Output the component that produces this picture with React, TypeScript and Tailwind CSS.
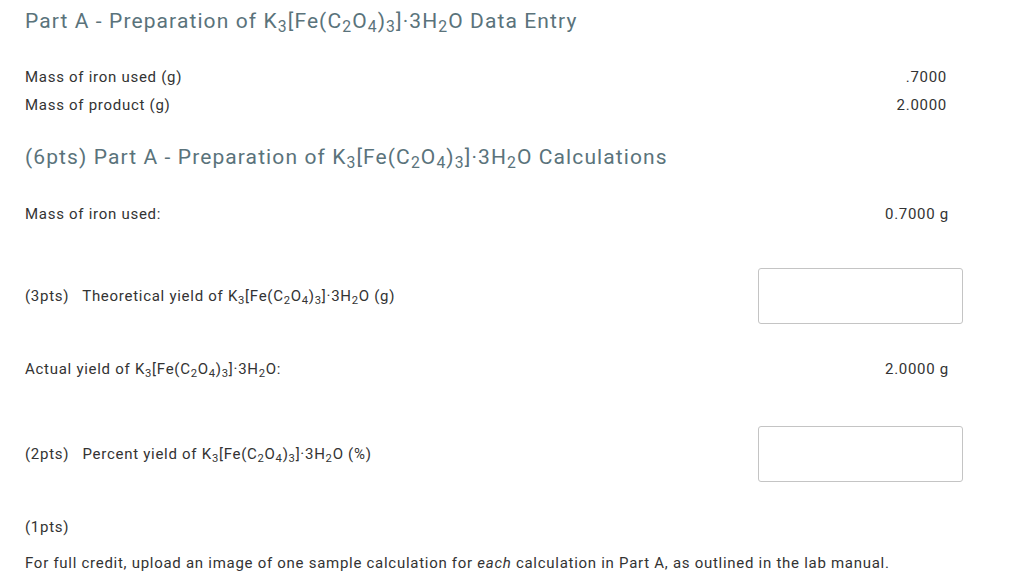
import React from 'react';

const Formula: React.FC = () => (
  <span>
    K<sub>3</sub>[Fe(C<sub>2</sub>O<sub>4</sub>)<sub>3</sub>]·3H<sub>2</sub>O
  </span>
);

const Box: React.FC = () => (
  <div className="w-[205px] h-[56px] rounded-[3px] border border-[#c4c4c4] bg-white" />
);

const App: React.FC = () => {
  return (
    <div
      className="w-[1024px] h-[578px] bg-white text-[#333] text-[15px] leading-[28px] tracking-[0.72px] px-[25px] pt-[7px] overflow-hidden"
      style={{ fontFamily: 'Roboto, "Liberation Sans", sans-serif' }}
    >
      <h1 className="text-[21px] leading-[28px] tracking-[1.1px] text-[#5a737b]">
        Part A - Preparation of <Formula /> Data Entry
      </h1>

      <div className="mt-[28px] pr-[52px]">
        <div className="flex justify-between">
          <span>Mass of iron used (g)</span>
          <span>.7000</span>
        </div>
        <div className="flex justify-between">
          <span>Mass of product (g)</span>
          <span>2.0000</span>
        </div>
      </div>

      <h2 className="mt-[24px] text-[21px] leading-[28px] tracking-[1.1px] text-[#5a737b]">
        (6pts) Part A - Preparation of <Formula /> Calculations
      </h2>

      <div className="mt-[29px] flex justify-between pr-[50px]">
        <span>Mass of iron used:</span>
        <span>0.7000 g</span>
      </div>

      <div className="mt-[40px] flex justify-between items-center pr-[36px]">
        <span>
          (3pts)&nbsp;&nbsp; Theoretical yield of <Formula /> (g)
        </span>
        <Box />
      </div>

      <div className="mt-[31px] flex justify-between pr-[50px]">
        <span>
          Actual yield of <Formula />:
        </span>
        <span>2.0000 g</span>
      </div>

      <div className="mt-[43px] flex justify-between items-center pr-[36px]">
        <span>
          (2pts)&nbsp;&nbsp; Percent yield of <Formula /> (%)
        </span>
        <Box />
      </div>

      <div className="mt-[31px]">(1pts)</div>
      <div className="mt-[8px]">
        For full credit, upload an image of one sample calculation for <em>each</em> calculation in Part A, as outlined in the lab manual.
      </div>
    </div>
  );
};

export default App;
